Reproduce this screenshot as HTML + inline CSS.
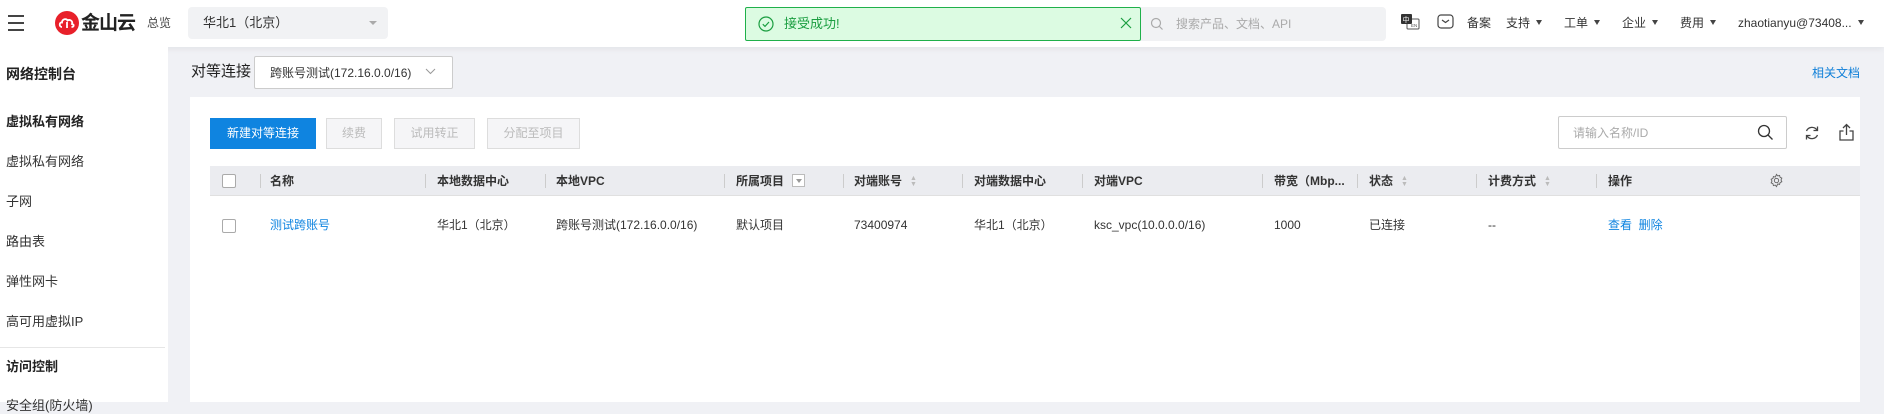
<!DOCTYPE html>
<html><head><meta charset="utf-8">
<style>
*{margin:0;padding:0;box-sizing:border-box}
body{width:1884px;height:402px;overflow:hidden;background:#f0f1f5;font-family:"Liberation Sans","Noto Sans CJK SC",sans-serif;font-size:13px;color:#333;position:relative;line-height:16px}
.a{position:absolute;white-space:nowrap;line-height:16px}
.hdr{position:absolute;left:0;top:0;width:1884px;height:47px;background:#fff;box-shadow:0 2px 6px rgba(0,0,0,.06)}
.side{position:absolute;left:0;top:47px;width:168px;height:355px;background:#fff}
.card{position:absolute;left:190px;top:97px;width:1670px;height:305px;background:#fff}
.btn{position:absolute;top:118px;height:31px;border:1px solid #ddd;background:#f5f5f7;color:#bbb;font-size:12px;text-align:center;line-height:29px}
.th{position:absolute;top:166px;left:210px;width:1650px;height:30px;background:#ebecf0;border-bottom:1px solid #e0e0e0}
.sep{position:absolute;top:174px;width:1px;height:14px;background:#ccc}
.thc{position:absolute;top:173px;font-weight:bold;color:#333;font-size:12px;line-height:16px;white-space:nowrap}
.td{position:absolute;top:217px;font-size:12px;color:#333;line-height:16px;white-space:nowrap}
.cb{position:absolute;width:14px;height:14px;border:1px solid #aaa;border-radius:2px;background:#fff}
.dd{display:inline-block;width:0;height:0;border-left:3.5px solid transparent;border-right:3.5px solid transparent;border-top:5px solid #444;margin-left:6px;vertical-align:2px}
.sort{display:inline-block;margin-left:8px;vertical-align:-1px;font-size:7px;line-height:6px;color:#bbb}
.nav{top:15px;font-size:12px}
</style></head><body>
<div class="hdr"></div>
<div class="a" style="left:8px;top:15px;width:16px;height:2px;background:#444"></div>
<div class="a" style="left:8px;top:22px;width:16px;height:2px;background:#444"></div>
<div class="a" style="left:8px;top:29px;width:16px;height:2px;background:#444"></div>
<svg class="a" style="left:55px;top:11px" width="24" height="24" viewBox="0 0 24 24"><circle cx="12" cy="12" r="12" fill="#e8202a"/><path d="M7 16c-3 0-3-5 0-4.5 0-3.5 4.5-4.5 5.5-2 2.5-1.5 5.5 0.5 4.5 3.5 2.5 0.5 2 3-0.5 3" stroke="#fff" stroke-width="1.8" fill="none"/><path d="M12 11v6" stroke="#fff" stroke-width="1.8"/></svg>
<div class="a" style="left:81px;top:13px;font-size:19px;line-height:22px;font-weight:bold;color:#222;letter-spacing:-1px">金山云</div>
<div class="a" style="left:147px;top:15px;font-size:12px;color:#444">总览</div>
<div class="a" style="left:188px;top:7px;width:200px;height:32px;background:#f1f2f4;border-radius:4px"></div>
<div class="a" style="left:203px;top:15px;font-size:13px;color:#333">华北1（北京）</div>
<div class="a" style="left:369px;top:21px;border-left:4px solid transparent;border-right:4px solid transparent;border-top:4px solid #aaa"></div>
<div class="a" style="left:745px;top:7px;width:396px;height:34px;background:#dcfbe2;border:1px solid #1fb04a;border-radius:2px"></div>
<svg class="a" style="left:758px;top:16px" width="16" height="16" viewBox="0 0 16 16"><circle cx="8" cy="8" r="7" fill="none" stroke="#1a9e40" stroke-width="1.2"/><path d="M4.8 8.2l2.2 2.2 4-4.4" stroke="#1a9e40" stroke-width="1.2" fill="none"/></svg>
<div class="a" style="left:784px;top:16px;font-size:13px;color:#1a9e40">接受成功!</div>
<svg class="a" style="left:1120px;top:17px" width="12" height="12" viewBox="0 0 12 12"><path d="M1 1l10 10M11 1L1 11" stroke="#1a9e40" stroke-width="1.2"/></svg>
<div class="a" style="left:1141px;top:7px;width:245px;height:34px;background:#f1f2f4;border-radius:0 4px 4px 0"></div>
<svg class="a" style="left:1150px;top:17px" width="14" height="14" viewBox="0 0 14 14"><circle cx="6" cy="6" r="4.5" fill="none" stroke="#aaa" stroke-width="1.2"/><path d="M9.5 9.5l3 3" stroke="#aaa" stroke-width="1.2"/></svg>
<div class="a" style="left:1176px;top:16px;font-size:12px;color:#aaa">搜索产品、文档、API</div>
<svg class="a" style="left:1401px;top:14px" width="19" height="16" viewBox="0 0 19 16"><rect x="6" y="5" width="12" height="10" rx="1" fill="#fff" stroke="#555"/><rect x="0" y="0" width="11" height="10" rx="1" fill="#333"/><text x="1.5" y="8" font-size="7" fill="#fff" font-family="Noto Sans CJK SC">中</text><text x="10" y="13" font-size="4.5" fill="#555">EN</text></svg>
<svg class="a" style="left:1437px;top:14px" width="17" height="15" viewBox="0 0 17 15"><rect x="1" y="1" width="15" height="13" rx="3" fill="none" stroke="#444" stroke-width="1.2"/><path d="M5 6l3.5 2.5L12 6" fill="none" stroke="#444" stroke-width="1.2"/></svg>
<div class="a nav" style="left:1467px">备案</div>
<div class="a nav" style="left:1506px">支持<span class="dd"></span></div>
<div class="a nav" style="left:1564px">工单<span class="dd"></span></div>
<div class="a nav" style="left:1622px">企业<span class="dd"></span></div>
<div class="a nav" style="left:1680px">费用<span class="dd"></span></div>
<div class="a nav" style="left:1738px">zhaotianyu@73408...<span class="dd"></span></div>
<div class="side"></div>
<div class="a" style="left:6px;top:66px;font-size:14px;font-weight:bold;color:#222">网络控制台</div>
<div class="a" style="left:6px;top:114px;font-size:13px;font-weight:bold;color:#222">虚拟私有网络</div>
<div class="a" style="left:6px;top:154px;font-size:13px">虚拟私有网络</div>
<div class="a" style="left:6px;top:194px;font-size:13px">子网</div>
<div class="a" style="left:6px;top:234px;font-size:13px">路由表</div>
<div class="a" style="left:6px;top:274px;font-size:13px">弹性网卡</div>
<div class="a" style="left:6px;top:314px;font-size:13px">高可用虚拟IP</div>
<div class="a" style="left:0;top:347px;width:165px;height:1px;background:#e6e6e6"></div>
<div class="a" style="left:6px;top:359px;font-size:13px;font-weight:bold;color:#222">访问控制</div>
<div class="a" style="left:6px;top:398px;font-size:13px">安全组(防火墙)</div>
<div class="a" style="left:191px;top:64px;font-size:15px;color:#222">对等连接</div>
<div class="a" style="left:254px;top:56px;width:199px;height:33px;background:#fff;border:1px solid #ccc;border-radius:2px"></div>
<div class="a" style="left:270px;top:65px;font-size:12px">跨账号测试(172.16.0.0/16)</div>
<svg class="a" style="left:425px;top:68px" width="11" height="7" viewBox="0 0 11 7"><path d="M1 1l4.5 4.5L10 1" fill="none" stroke="#999" stroke-width="1"/></svg>
<div class="a" style="left:1812px;top:65px;font-size:12px;color:#0f7fd8">相关文档</div>
<div class="card"></div>
<div class="btn" style="left:210px;width:106px;background:#0f84e0;border-color:#0f84e0;color:#fff">新建对等连接</div>
<div class="btn" style="left:326px;width:56px">续费</div>
<div class="btn" style="left:394px;width:81px">试用转正</div>
<div class="btn" style="left:487px;width:93px">分配至项目</div>
<div class="a" style="left:1558px;top:116px;width:229px;height:33px;border:1px solid #ccc;border-radius:2px;background:#fff"></div>
<div class="a" style="left:1573px;top:125px;font-size:12px;color:#aaa">请输入名称/ID</div>
<svg class="a" style="left:1757px;top:124px" width="17" height="17" viewBox="0 0 17 17"><circle cx="7" cy="7" r="5.5" fill="none" stroke="#333" stroke-width="1.3"/><path d="M11 11l4.5 4.5" stroke="#333" stroke-width="1.3"/></svg>
<svg class="a" style="left:1803px;top:124px" width="18" height="18" viewBox="0 0 18 18"><path d="M14 6A6 6 0 0 0 3.5 7M4 12a6 6 0 0 0 10.5-1" fill="none" stroke="#444" stroke-width="1.3"/><path d="M14.5 2.5V6.5h-4M3.5 15.5V11.5h4" fill="none" stroke="#444" stroke-width="1.3"/></svg>
<svg class="a" style="left:1838px;top:123px" width="17" height="19" viewBox="0 0 17 19"><path d="M8.5 12V2M5 5l3.5-3.5L12 5M5.5 8H2v9h13V8h-3.5" fill="none" stroke="#444" stroke-width="1.3"/></svg>
<div class="th"></div>
<div class="cb" style="left:222px;top:174px"></div>
<div class="sep" style="left:260px"></div><div class="thc" style="left:270px">名称</div>
<div class="sep" style="left:425px"></div><div class="thc" style="left:437px">本地数据中心</div>
<div class="sep" style="left:545px"></div><div class="thc" style="left:556px">本地VPC</div>
<div class="sep" style="left:724px"></div><div class="thc" style="left:736px">所属项目<span style="display:inline-block;width:13px;height:13px;border:1px solid #bbb;background:#fff;margin-left:8px;vertical-align:-2px;position:relative"><span style="position:absolute;left:3px;top:4px;border-left:3px solid transparent;border-right:3px solid transparent;border-top:4px solid #999"></span></span></div>
<div class="sep" style="left:843px"></div><div class="thc" style="left:854px">对端账号<span class="sort">▲<br>▼</span></div>
<div class="sep" style="left:962px"></div><div class="thc" style="left:974px">对端数据中心</div>
<div class="sep" style="left:1082px"></div><div class="thc" style="left:1094px">对端VPC</div>
<div class="sep" style="left:1262px"></div><div class="thc" style="left:1274px">带宽（Mbp...</div>
<div class="sep" style="left:1357px"></div><div class="thc" style="left:1369px">状态<span class="sort">▲<br>▼</span></div>
<div class="sep" style="left:1476px"></div><div class="thc" style="left:1488px">计费方式<span class="sort">▲<br>▼</span></div>
<div class="sep" style="left:1596px"></div><div class="thc" style="left:1608px">操作</div>
<svg class="a" style="left:1769px;top:173px" width="15" height="15" viewBox="0 0 16 16"><circle cx="8" cy="8" r="2.3" fill="none" stroke="#666" stroke-width="1"/><path d="M8 1.5l1.3 1.6 2-.5.5 2 1.9.9-.9 1.9.9 1.9-1.9.9-.5 2-2-.5L8 14.5l-1.3-1.6-2 .5-.5-2-1.9-.9.9-1.9-.9-1.9 1.9-.9.5-2 2 .5z" fill="none" stroke="#666" stroke-width="1"/></svg>
<div class="cb" style="left:222px;top:219px"></div>
<div class="td" style="left:270px;color:#0f84e0">测试跨账号</div>
<div class="td" style="left:437px">华北1（北京）</div>
<div class="td" style="left:556px">跨账号测试(172.16.0.0/16)</div>
<div class="td" style="left:736px">默认项目</div>
<div class="td" style="left:854px">73400974</div>
<div class="td" style="left:974px">华北1（北京）</div>
<div class="td" style="left:1094px">ksc_vpc(10.0.0.0/16)</div>
<div class="td" style="left:1274px">1000</div>
<div class="td" style="left:1369px">已连接</div>
<div class="td" style="left:1488px">--</div>
<div class="td" style="left:1608px;color:#0f84e0">查看&nbsp;&nbsp;删除</div>
</body></html>
